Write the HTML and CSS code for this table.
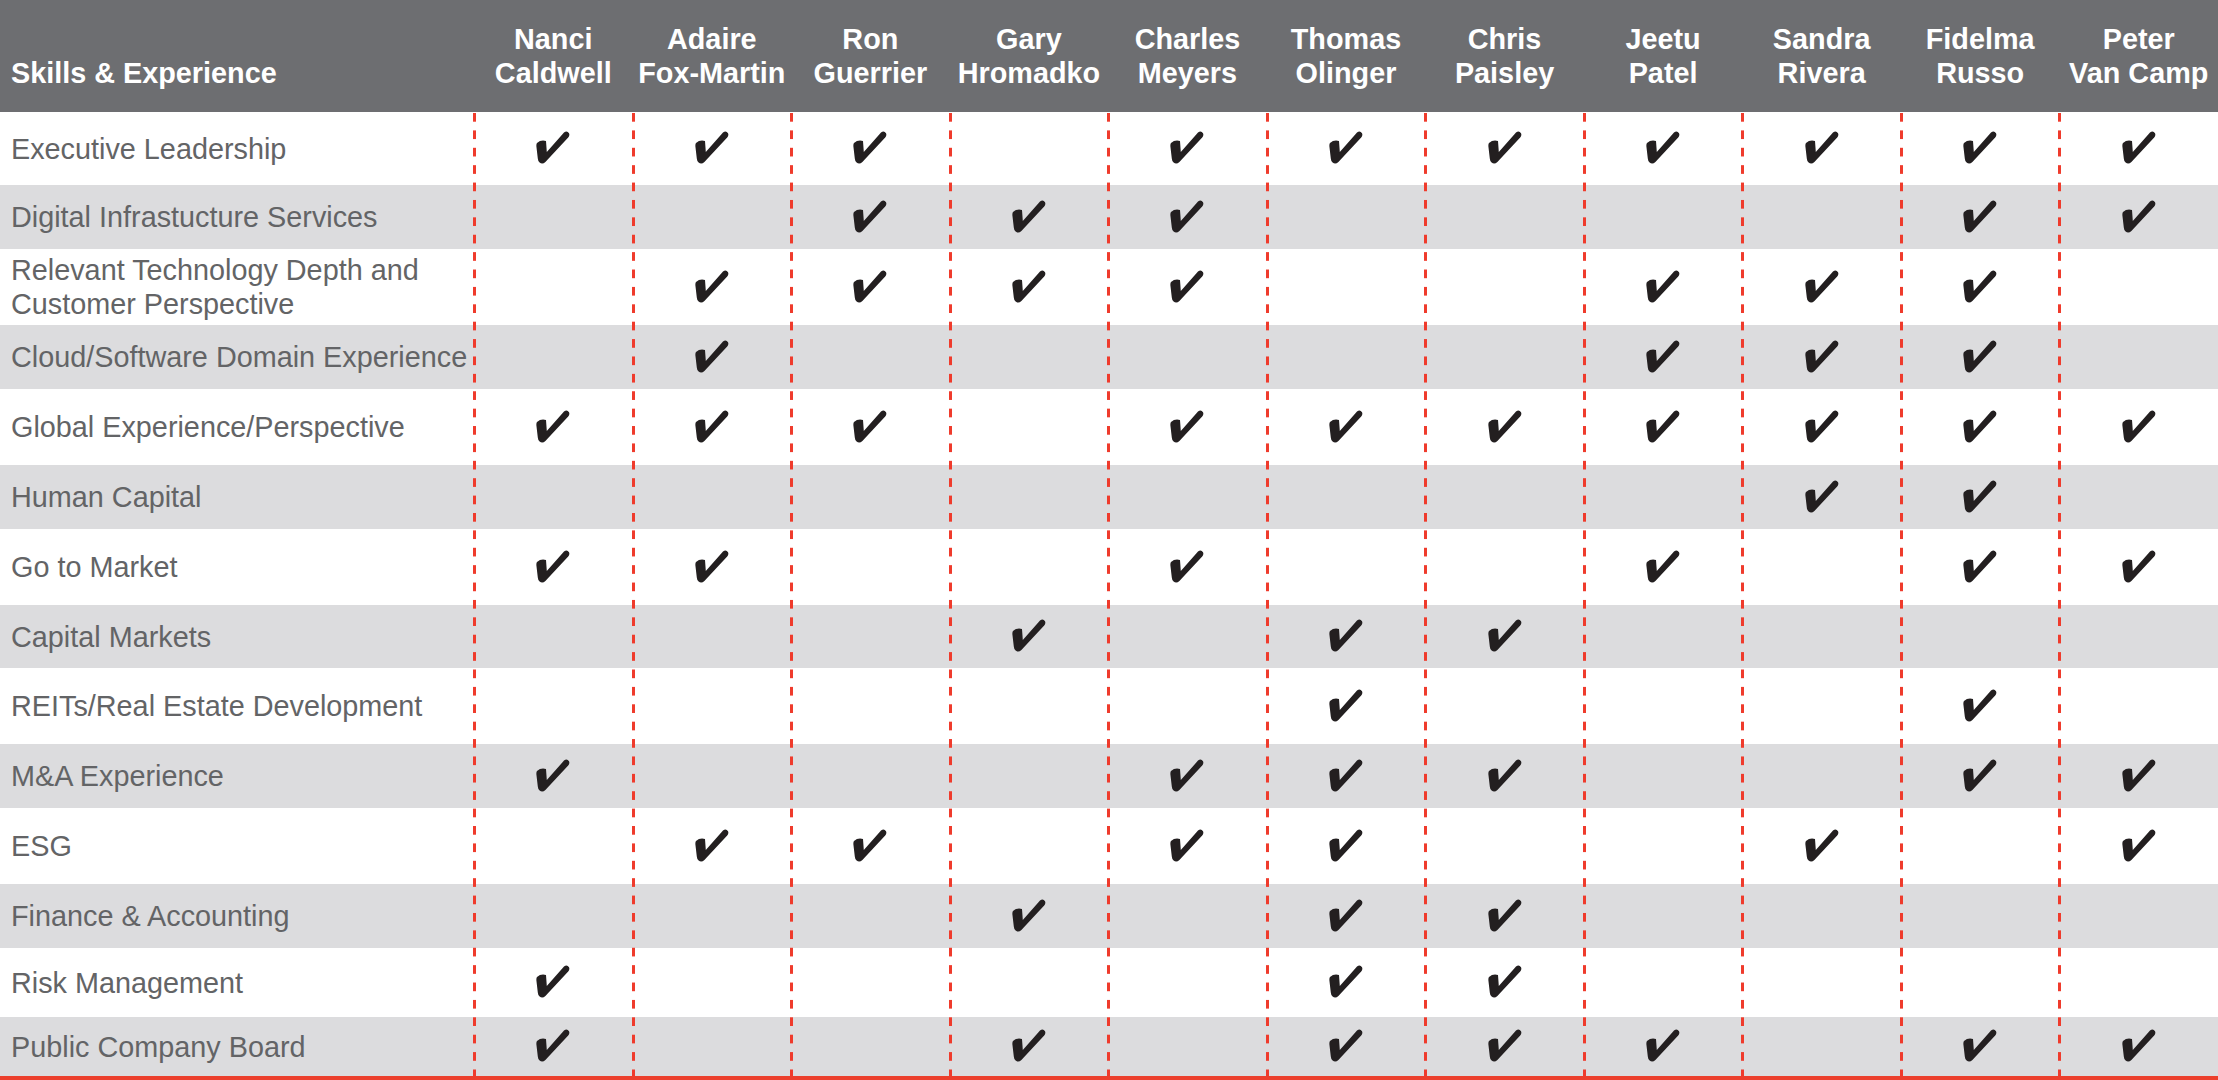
FILE: index.html
```html
<!DOCTYPE html>
<html lang="en">
<head>
<meta charset="utf-8">
<title>Skills &amp; Experience</title>
<link rel="stylesheet" href="styles.css">
</head>
<body>
<div class="matrix">
  <div class="thead">
    <div class="th th-label">Skills &amp; Experience</div>
    <div class="th">Nanci<br>Caldwell</div>
    <div class="th">Adaire<br>Fox-Martin</div>
    <div class="th">Ron<br>Guerrier</div>
    <div class="th">Gary<br>Hromadko</div>
    <div class="th">Charles<br>Meyers</div>
    <div class="th">Thomas<br>Olinger</div>
    <div class="th">Chris<br>Paisley</div>
    <div class="th">Jeetu<br>Patel</div>
    <div class="th">Sandra<br>Rivera</div>
    <div class="th">Fidelma<br>Russo</div>
    <div class="th">Peter<br>Van Camp</div>
  </div>
  <div class="tbody" id="tbody">
    <div class="dividers">
      <div></div><div class="dv"></div><div class="dv"></div><div class="dv"></div><div class="dv"></div><div class="dv"></div><div class="dv"></div><div class="dv"></div><div class="dv"></div><div class="dv"></div><div class="dv"></div><div class="dv"></div>
    </div>
  </div>
</div>
<script src="script.js"></script>
</body>
</html>
```

FILE: script.js
```javascript
(function () {
  var rows = [
    ["Executive Leadership", [1,1,1,0,1,1,1,1,1,1,1]],
    ["Digital Infrastucture Services", [0,0,1,1,1,0,0,0,0,1,1]],
    ["Relevant Technology Depth and<br>Customer Perspective", [0,1,1,1,1,0,0,1,1,1,0]],
    ["Cloud/Software Domain Experience", [0,1,0,0,0,0,0,1,1,1,0]],
    ["Global Experience/Perspective", [1,1,1,0,1,1,1,1,1,1,1]],
    ["Human Capital", [0,0,0,0,0,0,0,0,1,1,0]],
    ["Go to Market", [1,1,0,0,1,0,0,1,0,1,1]],
    ["Capital Markets", [0,0,0,1,0,1,1,0,0,0,0]],
    ["REITs/Real Estate Development", [0,0,0,0,0,1,0,0,0,1,0]],
    ["M&amp;A Experience", [1,0,0,0,1,1,1,0,0,1,1]],
    ["ESG", [0,1,1,0,1,1,0,0,1,0,1]],
    ["Finance &amp; Accounting", [0,0,0,1,0,1,1,0,0,0,0]],
    ["Risk Management", [1,0,0,0,0,1,1,0,0,0,0]],
    ["Public Company Board", [1,0,0,1,0,1,1,1,0,1,1]]
  ];
  var check = '<svg class="check" viewBox="0 0 34 34" width="34" height="34" aria-hidden="true">' +
    '<path d="M1,13 Q5,9.5 10,11 L10.8,22 L28,2.6 Q31,0.2 33,3.2 Q34,5.6 32.2,7.6 L9.4,32 Q6.4,34.8 3.6,32.6 Q2,31.2 1.8,28.4 L0.4,16.4 Q0.2,14 1,13 Z" fill="#231f20"/></svg>';
  var body = document.getElementById('tbody');
  var html = '';
  rows.forEach(function (r, i) {
    html += '<div class="tr ' + (i % 2 ? 'tr-gray' : 'tr-white') + '"><div class="td td-label">' + r[0] + '</div>';
    r[1].forEach(function (v) {
      html += '<div class="td td-mark">' + (v ? check : '') + '</div>';
    });
    html += '</div>';
  });
  body.insertAdjacentHTML('afterbegin', html);
})();
```

FILE: styles.css
```css
html, body {
  margin: 0;
  padding: 0;
  overflow: hidden;
  background: #ffffff;
}

body {
  font-family: "Liberation Sans", Arial, Helvetica, sans-serif;
  width: 2218px;
  height: 1080px;
}

.matrix {
  display: flex;
  flex-direction: column;
  width: 2218px;
}

.thead {
  display: grid;
  grid-template-columns: 474px repeat(11, 1fr);
  align-items: end;
  height: 112px;
  box-sizing: border-box;
  padding: 22px 0;
  background: #6d6e71;
  color: #ffffff;
  font-weight: bold;
  font-size: 28.8px;
  line-height: 34px;
}

.th {
  text-align: center;
  white-space: nowrap;
}

.th-label {
  text-align: left;
  padding-left: 11px;
}

.tbody {
  position: relative;
  display: grid;
  grid-template-rows: 73px 64px 76px 64px 76px 64px 76px 63px 76px 64px 76px 64px 69px 59px;
  border-bottom: 4px solid #ec3f2c;
}

.tr {
  display: grid;
  grid-template-columns: 474px repeat(11, 1fr);
  align-items: center;
}

.tr-white {
  background: #ffffff;
}

.tr-gray {
  background: #dcdcde;
}

.td {
  display: flex;
  align-items: center;
  height: 100%;
}

.td-label {
  padding-left: 11px;
  color: #636466;
  font-size: 28.8px;
  line-height: 34px;
  white-space: nowrap;
}

.td-mark {
  justify-content: center;
}

.check {
  display: block;
  margin-bottom: 3px;
}

.dividers {
  position: absolute;
  inset: 0;
  display: grid;
  grid-template-columns: 474px repeat(11, 1fr);
  pointer-events: none;
}

.dv {
  margin-left: -1px;
  background-image: linear-gradient(to bottom, #ef3b2c 0, #ef3b2c 8.6px, transparent 8.6px, transparent 17.4px);
  background-size: 3px 17.4px;
  background-repeat: repeat-y;
  background-position: 0 1px;
}
```
